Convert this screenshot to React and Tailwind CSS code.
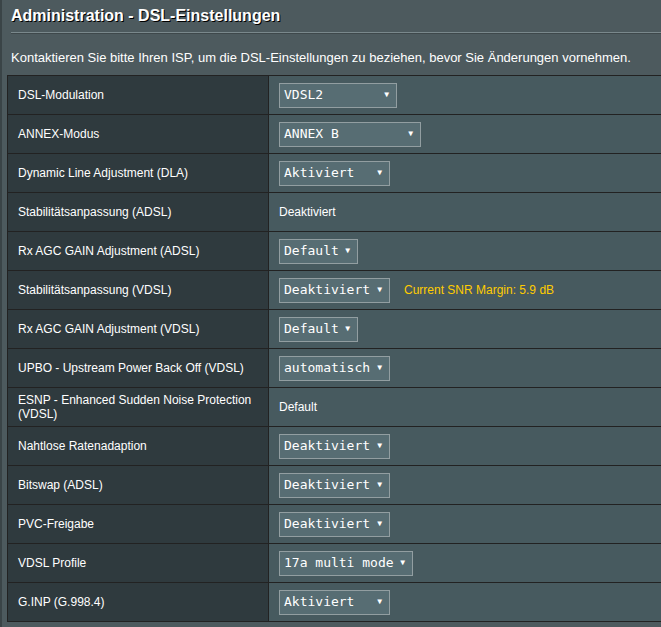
import React from 'react';

const rows = [
  { label: 'DSL-Modulation', select: 'VDSL2', w: 'w-[118px]' },
  { label: 'ANNEX-Modus', select: 'ANNEX B', w: 'w-[142px]' },
  { label: 'Dynamic Line Adjustment (DLA)', select: 'Aktiviert', w: 'w-[111px]' },
  { label: 'Stabilitätsanpassung (ADSL)', text: 'Deaktiviert' },
  { label: 'Rx AGC GAIN Adjustment (ADSL)', select: 'Default', w: 'w-[79px]' },
  { label: 'Stabilitätsanpassung (VDSL)', select: 'Deaktiviert', w: 'w-[111px]', note: 'Current SNR Margin: 5.9 dB' },
  { label: 'Rx AGC GAIN Adjustment (VDSL)', select: 'Default', w: 'w-[79px]' },
  { label: 'UPBO - Upstream Power Back Off (VDSL)', select: 'automatisch', w: 'w-[111px]' },
  { label: 'ESNP - Enhanced Sudden Noise Protection (VDSL)', text: 'Default' },
  { label: 'Nahtlose Ratenadaption', select: 'Deaktiviert', w: 'w-[111px]' },
  { label: 'Bitswap (ADSL)', select: 'Deaktiviert', w: 'w-[111px]' },
  { label: 'PVC-Freigabe', select: 'Deaktiviert', w: 'w-[111px]' },
  { label: 'VDSL Profile', select: '17a multi mode', w: 'w-[134px]' },
  { label: 'G.INP (G.998.4)', select: 'Aktiviert', w: 'w-[111px]' },
];

function FakeSelect({ value, w }) {
  return (
    <div className={`${w} h-[25px] bg-[#576D73] border border-[#929EA1] flex items-center justify-between pl-[4px] pr-[7px] text-[13px] text-white font-['DejaVu_Sans_Mono',monospace]`}>
      <span className="whitespace-pre">{value}</span>
      <span className="text-[8px] leading-none">▼</span>
    </div>
  );
}

export default function App() {
  return (
    <div className="w-[661px] h-[627px] overflow-hidden bg-[#4D5A5E] border-l-2 border-[#3A4447] font-['Liberation_Sans',Arial,sans-serif] text-white">
      <div className="w-[780px]">
        <div className="pl-[9px] pt-[4px] h-[32px] text-[16px] font-bold [text-shadow:1px_1px_0_#000]">
          Administration - DSL-Einstellungen
        </div>
        <div className="ml-[9px] h-[2px] border-t border-[#7A888C] border-b border-b-[#3E484B]" />
        <div className="pl-[9px] pt-[14px] h-[41px] text-[13px]">
          Kontaktieren Sie bitte Ihren ISP, um die DSL-Einstellungen zu beziehen, bevor Sie Änderungen vornehmen.
        </div>
        <table className="ml-[5px] w-[760px] border-collapse border border-[#222]">
          <tbody>
            {rows.map((r) => (
              <tr key={r.label} className="h-[39px]">
                <td className="w-[261px] bg-[#2F3A3E] border border-[#222] pl-[10px] pr-[4px] text-[12px] leading-[14px]">
                  {r.label}
                </td>
                <td className="bg-[#475A5F] border border-[#222] pl-[10px] text-[12px]">
                  {r.text ? (
                    r.text
                  ) : (
                    <div className="flex items-center">
                      <FakeSelect value={r.select} w={r.w} />
                      {r.note && <span className="ml-[14px] text-[#FFCC00]">{r.note}</span>}
                    </div>
                  )}
                </td>
              </tr>
            ))}
          </tbody>
        </table>
      </div>
    </div>
  );
}
